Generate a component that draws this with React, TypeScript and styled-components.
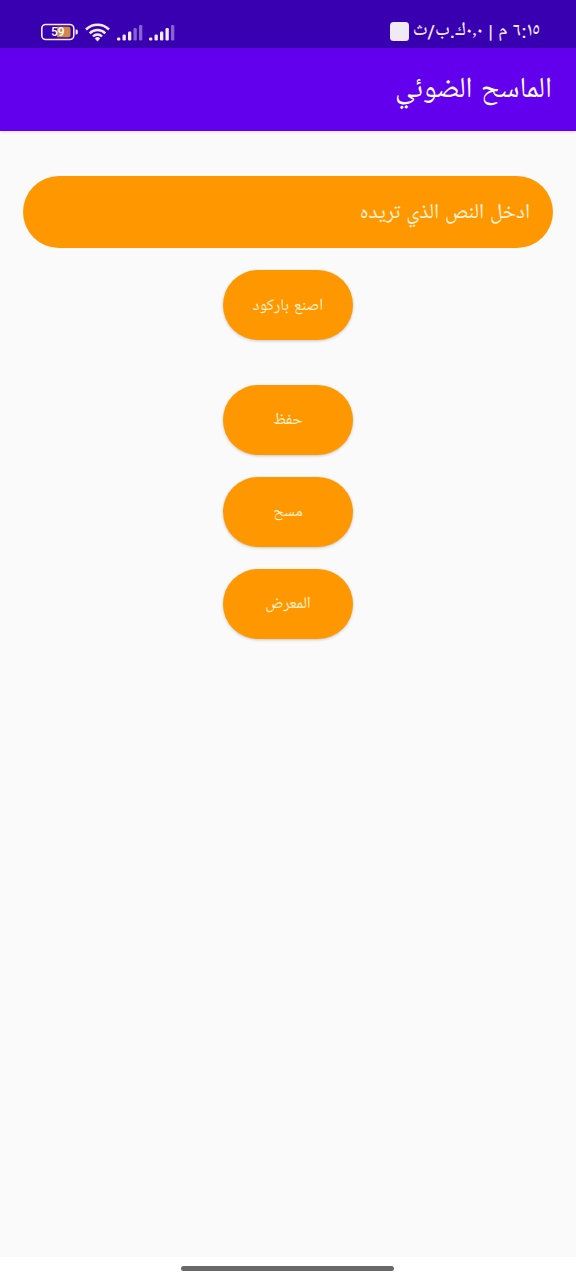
import React from "react";
import styled, { createGlobalStyle } from "styled-components";

const GlobalStyle = createGlobalStyle`
  * { box-sizing: border-box; }
  body {
    margin: 0;
    background: #fafafa;
    font-family: Roboto, "Noto Naskh Arabic UI", "Noto Naskh Arabic", "DejaVu Sans", sans-serif;
  }
`;

const Screen = styled.div`
  display: flex;
  flex-direction: column;
  width: 576px;
  height: 1280px;
  overflow: hidden;
  background: #fafafa;
`;

const StatusBar = styled.header`
  display: flex;
  justify-content: space-between;
  align-items: center;
  flex: none;
  height: 48px;
  padding: 15px 36px 0 40px;
  background: #3900b1;
  color: #f3eafb;
`;

const StatusInfo = styled.div`
  display: flex;
  align-items: center;
  gap: 4px;
`;

const StatusText = styled.span`
  font-size: 19px;
  font-weight: 500;
  line-height: 24px;
  word-spacing: 0.5px;
  white-space: nowrap;
`;

const NotificationSquare = styled.span`
  width: 19px;
  height: 19px;
  border-radius: 3.5px;
  background: #f0e9f6;
`;

const AppBar = styled.div`
  display: flex;
  align-items: center;
  flex: none;
  height: 83px;
  padding: 2px 24px 0;
  background: #6200ee;
  box-shadow: 0 1px 3px rgba(0, 0, 0, 0.12);
`;

const Title = styled.h1`
  margin: 0;
  font-size: 29.2px;
  font-weight: 400;
  line-height: 40px;
  word-spacing: 1px;
  color: #fff;
  white-space: nowrap;
`;

const Content = styled.main`
  display: flex;
  flex-direction: column;
  align-items: center;
  flex: 1;
  padding: 45px 23px 0;
`;

const TextField = styled.div`
  display: flex;
  align-items: center;
  align-self: stretch;
  height: 72px;
  padding: 1px 23px 0;
  border-radius: 38px;
  background: #ff9800;
  color: #fff3d9;
  font-size: 21.3px;
  word-spacing: 0.6px;
`;

const ActionButton = styled.button<{ $gap: number }>`
  width: 130px;
  height: 70px;
  margin: ${({ $gap }) => $gap}px 0 0;
  padding: 0;
  border: 0;
  border-radius: 38px;
  background: #ff9800;
  box-shadow: 0 1px 3px rgba(0, 0, 0, 0.2);
  color: #fff3d0;
  font-family: inherit;
  font-size: 16.4px;
  word-spacing: 0.8px;
`;

const NavigationBar = styled.footer`
  display: flex;
  justify-content: center;
  flex: none;
  height: 23px;
  padding: 9px 1px 0 0;
  background: #fff;
`;

const HomeHandle = styled.span`
  width: 213px;
  height: 5px;
  border-radius: 3px;
  background: #696969;
`;

const actions = [
  { label: "اصنع باركود", gap: 22.4 },
  { label: "حفظ", gap: 44.2 },
  { label: "مسح", gap: 22 },
  { label: "المعرض", gap: 22 },
];

const StatusIcons = () => (
  <svg width="136" height="22" viewBox="0 0 136 22" aria-hidden="true">
    <rect x="1.8" y="3.5" width="32" height="15" rx="4" fill="none" stroke="#f3eafb" strokeWidth="1.6" />
    <path d="M35.6 8.5h.8a1.4 1.4 0 0 1 1.4 1.4v2.2a1.4 1.4 0 0 1-1.4 1.4h-.8z" fill="#f3eafb" />
    <path d="M17 5.8h11.5a2 2 0 0 1 2 2v6.5a2 2 0 0 1-2 2H17z" fill="#d08a48" />
    <text x="17.8" y="15.2" textAnchor="middle" fill="#fff" fontFamily="Roboto, sans-serif" fontSize="12" fontWeight="500">
      59
    </text>
    <g fill="none" stroke="#f3eafb" strokeWidth="2.5">
      <path d="M46 8.5a16.3 16.3 0 0 1 23 0" />
      <path d="M49.7 12.3a11 11 0 0 1 15.6 0" />
      <path d="M53 15.5a6.3 6.3 0 0 1 9 0" />
    </g>
    <path d="M54.8 17.4a3.8 3.8 0 0 1 5.4 0l-2.7 3z" fill="#f3eafb" />
    {[77, 109].map((x, group) => (
      <g key={x} fill="#f3eafb">
        {[3, 6, 9, 12.5, 15.5].map((height, i) => (
          <rect
            key={height}
            x={x + i * 5.5}
            y={19.5 - height}
            width="3.3"
            height={height}
            rx="1.2"
            opacity={i >= 3 + group ? 0.42 : 1}
          />
        ))}
      </g>
    ))}
  </svg>
);

export default function App() {
  return (
    <>
      <GlobalStyle />
      <Screen dir="rtl" lang="ar">
        <StatusBar>
          <StatusInfo>
            <StatusText>٦:١٥ م | ٠٫٠ك.ب/ث</StatusText>
            <NotificationSquare />
          </StatusInfo>
          <StatusIcons />
        </StatusBar>
        <AppBar>
          <Title>الماسح الضوئي</Title>
        </AppBar>
        <Content>
          <TextField>ادخل النص الذي تريده</TextField>
          {actions.map(({ label, gap }) => (
            <ActionButton key={label} type="button" $gap={gap}>
              {label}
            </ActionButton>
          ))}
        </Content>
        <NavigationBar>
          <HomeHandle />
        </NavigationBar>
      </Screen>
    </>
  );
}
